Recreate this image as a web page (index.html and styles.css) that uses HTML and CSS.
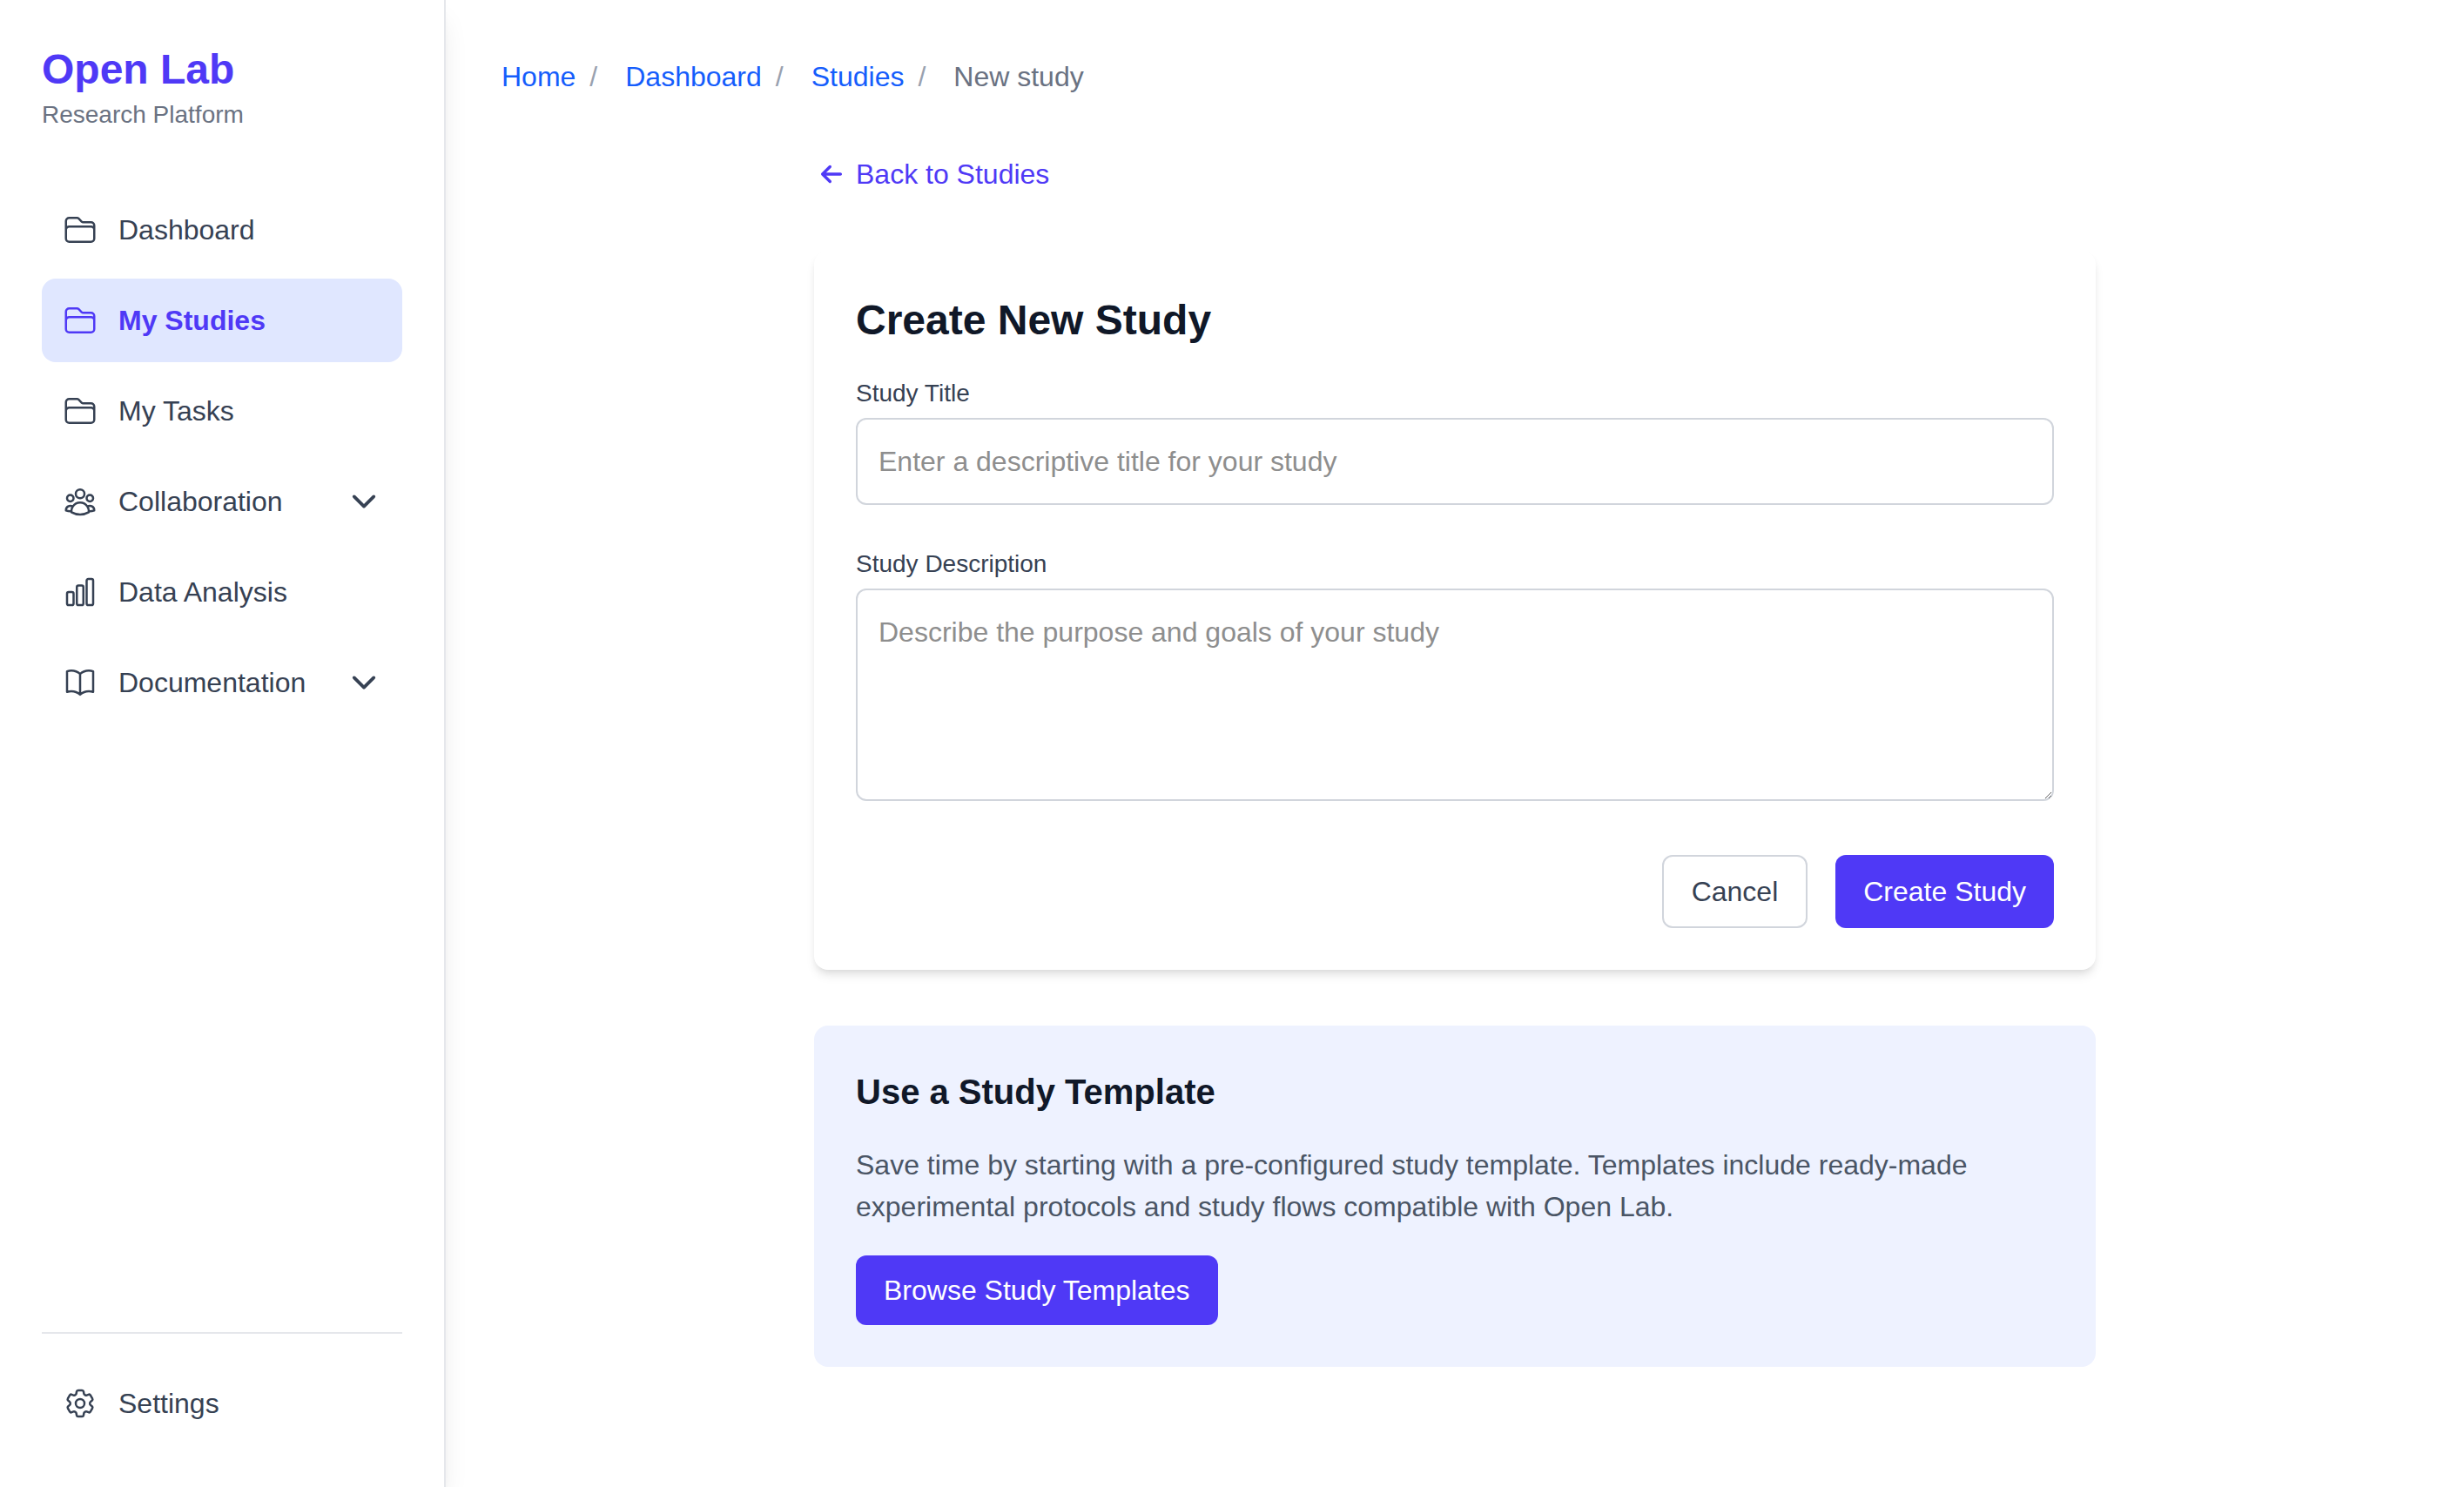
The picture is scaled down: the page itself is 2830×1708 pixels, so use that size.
FILE: index.html
```html
<!DOCTYPE html>
<html lang="en">
<head>
<meta charset="utf-8">
<meta name="viewport" content="width=device-width, initial-scale=1">
<title>New study - Open Lab</title>
<link rel="stylesheet" href="styles.css">
</head>
<body>
<svg class="sprite" aria-hidden="true">
  <symbol id="folder" viewBox="0 0 24 24"><path d="M2.25 12.75V12A2.25 2.25 0 0 1 4.5 9.75h15A2.25 2.25 0 0 1 21.75 12v.75m-8.69-6.44-2.12-2.12a1.5 1.5 0 0 0-1.061-.44H4.5A2.25 2.25 0 0 0 2.25 6v12a2.25 2.25 0 0 0 2.25 2.25h15A2.25 2.25 0 0 0 21.75 18V9a2.25 2.25 0 0 0-2.25-2.25h-5.379a1.5 1.5 0 0 1-1.06-.44Z"/></symbol>
  <symbol id="chevron" viewBox="0 0 512 512"><path d="m112 184 144 144 144-144"/></symbol>
</svg>
<div class="layout">
  <aside class="sidebar">
    <header class="brand">
      <p class="brand-name">Open Lab</p>
      <p class="brand-tagline">Research Platform</p>
    </header>
    <nav class="menu" aria-label="Main">
      <a class="menu-item" href="#dashboard"><svg class="icon"><use href="#folder"/></svg>Dashboard</a>
      <a class="menu-item active" href="#studies" aria-current="page"><svg class="icon"><use href="#folder"/></svg>My Studies</a>
      <a class="menu-item" href="#tasks"><svg class="icon"><use href="#folder"/></svg>My Tasks</a>
      <button class="menu-item" type="button" aria-expanded="false"><svg class="icon" viewBox="0 0 24 24"><path d="M18 18.72a9.094 9.094 0 0 0 3.741-.479 3 3 0 0 0-4.682-2.72m.94 3.198.001.031c0 .225-.012.447-.037.666A11.944 11.944 0 0 1 12 21c-2.17 0-4.207-.576-5.963-1.584A6.062 6.062 0 0 1 6 18.719m12 0a5.971 5.971 0 0 0-.941-3.197m0 0A5.995 5.995 0 0 0 12 12.75a5.995 5.995 0 0 0-5.058 2.772m0 0a3 3 0 0 0-4.681 2.72 8.986 8.986 0 0 0 3.74.477m.94-3.197a5.971 5.971 0 0 0-.94 3.197M15 6.75a3 3 0 1 1-6 0 3 3 0 0 1 6 0Zm6 3a2.25 2.25 0 1 1-4.5 0 2.25 2.25 0 0 1 4.5 0Zm-13.5 0a2.25 2.25 0 1 1-4.5 0 2.25 2.25 0 0 1 4.5 0Z"/></svg>Collaboration<svg class="icon chevron"><use href="#chevron"/></svg></button>
      <a class="menu-item" href="#analysis"><svg class="icon" viewBox="0 0 24 24"><path d="M3 13.125C3 12.504 3.504 12 4.125 12h2.25c.621 0 1.125.504 1.125 1.125v6.75C7.5 20.496 6.996 21 6.375 21h-2.25A1.125 1.125 0 0 1 3 19.875v-6.75ZM9.75 8.625c0-.621.504-1.125 1.125-1.125h2.25c.621 0 1.125.504 1.125 1.125v11.25c0 .621-.504 1.125-1.125 1.125h-2.25a1.125 1.125 0 0 1-1.125-1.125V8.625ZM16.5 4.125c0-.621.504-1.125 1.125-1.125h2.25C20.496 3 21 3.504 21 4.125v15.75c0 .621-.504 1.125-1.125 1.125h-2.25a1.125 1.125 0 0 1-1.125-1.125V4.125Z"/></svg>Data Analysis</a>
      <button class="menu-item" type="button" aria-expanded="false"><svg class="icon" viewBox="0 0 24 24"><path d="M12 6.042A8.967 8.967 0 0 0 6 3.75c-1.052 0-2.062.18-3 .512v14.25A8.987 8.987 0 0 1 6 18c2.305 0 4.408.867 6 2.292m0-14.25a8.966 8.966 0 0 1 6-2.292c1.052 0 2.062.18 3 .512v14.25A8.987 8.987 0 0 0 18 18a8.967 8.967 0 0 0-6 2.292m0-14.25v14.25"/></svg>Documentation<svg class="icon chevron"><use href="#chevron"/></svg></button>
    </nav>
    <div class="sidebar-footer">
      <a class="menu-item" href="#settings"><svg class="icon" viewBox="0 0 24 24"><path d="M9.594 3.94c.09-.542.56-.94 1.11-.94h2.593c.55 0 1.02.398 1.11.94l.213 1.281c.063.374.313.686.645.87.074.04.147.083.22.127.325.196.72.257 1.075.124l1.217-.456a1.125 1.125 0 0 1 1.37.49l1.296 2.247a1.125 1.125 0 0 1-.26 1.431l-1.003.827c-.293.241-.438.613-.43.992a7.723 7.723 0 0 1 0 .255c-.008.378.137.75.43.991l1.004.827c.424.35.534.955.26 1.43l-1.298 2.247a1.125 1.125 0 0 1-1.369.491l-1.217-.456c-.355-.133-.75-.072-1.076.124a6.47 6.47 0 0 1-.22.128c-.331.183-.581.495-.644.869l-.213 1.281c-.09.543-.56.94-1.11.94h-2.594c-.55 0-1.019-.398-1.11-.94l-.213-1.281c-.062-.374-.312-.686-.644-.87a6.52 6.52 0 0 1-.22-.127c-.325-.196-.72-.257-1.076-.124l-1.217.456a1.125 1.125 0 0 1-1.369-.49l-1.297-2.247a1.125 1.125 0 0 1 .26-1.431l1.004-.827c.292-.24.437-.613.43-.991a6.932 6.932 0 0 1 0-.255c.007-.38-.138-.751-.43-.992l-1.004-.827a1.125 1.125 0 0 1-.26-1.43l1.297-2.247a1.125 1.125 0 0 1 1.37-.491l1.216.456c.356.133.751.072 1.076-.124.072-.044.146-.086.22-.128.332-.183.582-.495.644-.869l.214-1.28Z"/><path d="M15 12a3 3 0 1 1-6 0 3 3 0 0 1 6 0Z"/></svg>Settings</a>
    </div>
  </aside>
  <main class="main">
    <nav aria-label="Breadcrumb">
      <ol class="breadcrumb">
        <li><a href="#home">Home</a></li>
        <li><a href="#dashboard">Dashboard</a></li>
        <li><a href="#studies">Studies</a></li>
        <li aria-current="page">New study</li>
      </ol>
    </nav>
    <div class="content">
      <a class="back" href="#studies"><svg class="back-icon" viewBox="-149 -117 746 746"><path d="M9.400 233.400c-12.500 12.500-12.500 32.800 0 45.300l160 160c12.500 12.500 32.800 12.500 45.300 0s12.500-32.800 0-45.300L109.200 288 416 288c17.700 0 32-14.300 32-32s-14.300-32-32-32l-306.700 0L214.600 118.600c12.500-12.500 12.500-32.800 0-45.300s-32.800-12.500-45.300 0l-160 160z"/></svg>Back to Studies</a>
      <section class="card">
        <h1 class="card-title">Create New Study</h1>
        <form class="form">
          <div class="field">
            <label for="title">Study Title</label>
            <input id="title" type="text" placeholder="Enter a descriptive title for your study">
          </div>
          <div class="field">
            <label for="description">Study Description</label>
            <textarea id="description" rows="4" placeholder="Describe the purpose and goals of your study"></textarea>
          </div>
          <div class="actions">
            <button class="button outline" type="button">Cancel</button>
            <button class="button primary" type="submit">Create Study</button>
          </div>
        </form>
      </section>
      <section class="template">
        <h2 class="template-title">Use a Study Template</h2>
        <p class="template-text">Save time by starting with a pre-configured study template. Templates include ready-made experimental protocols and study flows compatible with Open Lab.</p>
        <button class="button primary" type="button">Browse Study Templates</button>
      </section>
    </div>
  </main>
</div>
</body>
</html>
```
FILE: styles.css
```css
* { box-sizing: border-box; margin: 0; padding: 0; }

:root {
  --accent: #4f39f6;
  --ink: #101828;
  --text: #364153;
  --border: #d1d5dc;
  --line: #e5e7eb;
}

body {
  font: 32px/48px "Liberation Sans", Arial, sans-serif;
  color: var(--text);
  background: #fff;
}

a { color: inherit; text-decoration: none; }
button, input, textarea { font: inherit; color: inherit; }
button { cursor: pointer; }

.sprite { position: absolute; width: 0; height: 0; }

.layout { display: flex; min-height: 100vh; }

.sidebar {
  display: flex;
  flex-direction: column;
  flex: none;
  width: 512px;
  padding: 48px;
  background: #fff;
  border-right: 2px solid var(--line);
  box-shadow: 0 20px 30px -6px rgb(0 0 0 / .1), 0 8px 12px -8px rgb(0 0 0 / .1);
}

.brand { margin-bottom: 64px; }
.brand-name { font-size: 48px; line-height: 64px; font-weight: 700; color: var(--accent); }
.brand-tagline { font-size: 28px; line-height: 40px; color: #6a7282; }

.menu { display: flex; flex-direction: column; flex: 1; gap: 8px; }
.menu-item {
  display: flex;
  align-items: center;
  gap: 24px;
  width: 100%;
  padding: 24px;
  border: 0;
  border-radius: 16px;
  background: none;
  text-align: left;
}
.menu-item.active { background: #e0e7ff; color: var(--accent); font-weight: 600; }

.icon {
  flex: none;
  width: 40px;
  height: 40px;
  fill: none;
  stroke: currentColor;
  stroke-width: 1.5;
  stroke-linecap: round;
  stroke-linejoin: round;
}
.chevron { margin-left: auto; stroke-width: 48; }

.sidebar-footer { padding-top: 32px; border-top: 2px solid var(--line); }

.main { flex: 1; min-width: 0; padding: 64px; }

.breadcrumb { display: flex; gap: 16px; list-style: none; color: #6a7282; }
.breadcrumb a { color: #155dfc; }
.breadcrumb li:not(:last-child)::after { content: "/"; margin: 0 16px; color: #99a1af; }

.content { max-width: 1536px; margin: 0 auto; padding: 64px 32px; }

.back { display: flex; align-items: center; gap: 8px; width: fit-content; color: var(--accent); }
.back-icon { width: 40px; height: 40px; fill: currentColor; }

.card {
  margin-top: 64px;
  padding: 48px;
  border-radius: 16px;
  background: #fff;
  box-shadow: 0 8px 12px -2px rgb(0 0 0 / .1), 0 4px 8px -4px rgb(0 0 0 / .1);
}
.card-title { margin-bottom: 32px; font-size: 48px; line-height: 64px; color: var(--ink); }

.field { display: flex; flex-direction: column; gap: 8px; margin-bottom: 48px; }
.field label { font-size: 28px; line-height: 40px; }
.field input, .field textarea {
  width: 100%;
  padding: 24px;
  border: 2px solid var(--border);
  border-radius: 12px;
  background: none;
}
.field textarea { display: block; resize: vertical; }
::placeholder { color: #8e8e8e; }

.actions { display: flex; justify-content: flex-end; gap: 32px; padding-top: 14px; }
.button { padding: 16px 32px; border: 0; border-radius: 12px; }
.button.outline { border: 2px solid var(--border); background: none; }
.button.primary { background: var(--accent); color: #fff; }

.template { margin-top: 64px; padding: 48px; border-radius: 16px; background: #eef2ff; }
.template-title { font-size: 40px; line-height: 56px; color: var(--ink); }
.template-text { margin: 32px 0; color: #4a5565; }
```
